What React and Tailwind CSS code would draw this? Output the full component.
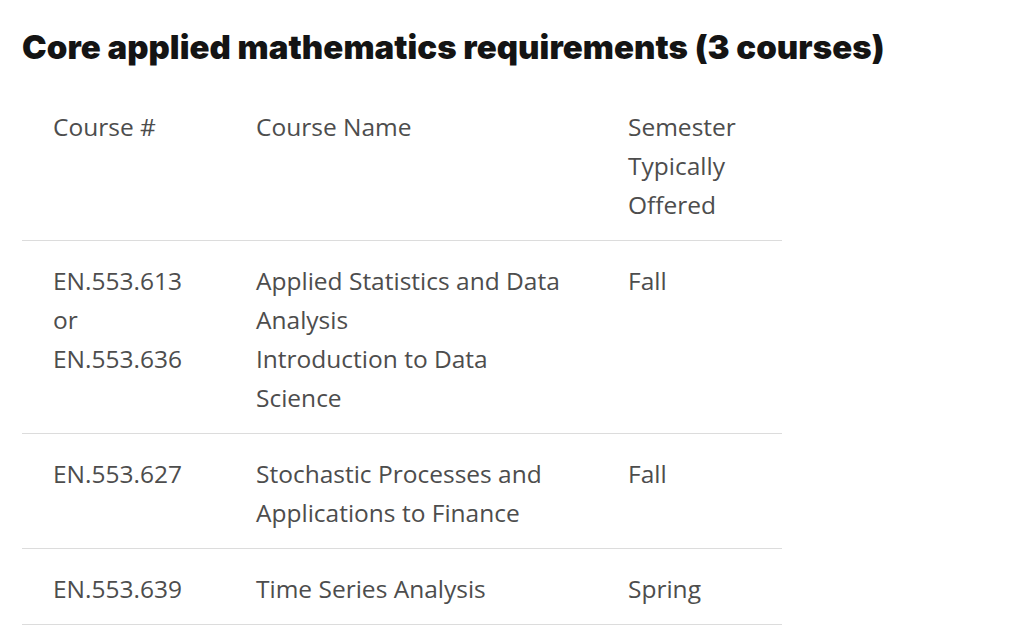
import React from 'react';

const rows = [
    {
        num: ['EN.553.613', 'or', 'EN.553.636'],
        name: ['Applied Statistics and Data', 'Analysis', 'Introduction to Data', 'Science'],
        term: 'Fall',
    },
    {
        num: ['EN.553.627'],
        name: ['Stochastic Processes and', 'Applications to Finance'],
        term: 'Fall',
    },
    {
        num: ['EN.553.639'],
        name: ['Time Series Analysis'],
        term: 'Spring',
    },
];

const cell = 'align-top pl-[31px] pr-[10px] pt-[20px] pb-[16px] whitespace-nowrap';

const App = () => {
    return (
        <div className="min-h-screen bg-white px-[22px] pt-[26px]" style={{ fontFamily: '"Open Sans", "Liberation Sans", sans-serif' }}>
            {/* Heading */}
            <h2
                className="text-[33px] leading-[42px] font-black text-[#141414] tracking-[0.05px]"
                style={{ fontFamily: 'Inter, "Liberation Sans", sans-serif' }}
            >
                Core applied mathematics requirements (3 courses)
            </h2>

            {/* Table */}
            <table className="mt-[18.5px] w-[760px] table-fixed border-collapse text-[24.5px] leading-[39px] text-[#4d4d4d]">
                <colgroup>
                    <col className="w-[203px]" />
                    <col className="w-[372px]" />
                    <col className="w-[185px]" />
                </colgroup>
                <thead>
                    <tr className="border-b border-[#dcdcdc]">
                        <th className={`${cell} font-normal text-left`}>Course #</th>
                        <th className={`${cell} font-normal text-left`}>Course Name</th>
                        <th className={`${cell} font-normal text-left`}>
                            Semester<br />Typically<br />Offered
                        </th>
                    </tr>
                </thead>
                <tbody>
                    {rows.map((row) => (
                        <tr key={row.num[0]} className="border-b border-[#dcdcdc]">
                            <td className={cell}>
                                {row.num.map((n) => (
                                    <div key={n}>{n}</div>
                                ))}
                            </td>
                            <td className={cell}>
                                {row.name.map((n) => (
                                    <div key={n}>{n}</div>
                                ))}
                            </td>
                            <td className={cell}>{row.term}</td>
                        </tr>
                    ))}
                </tbody>
            </table>
        </div>
    );
};

export default App;
